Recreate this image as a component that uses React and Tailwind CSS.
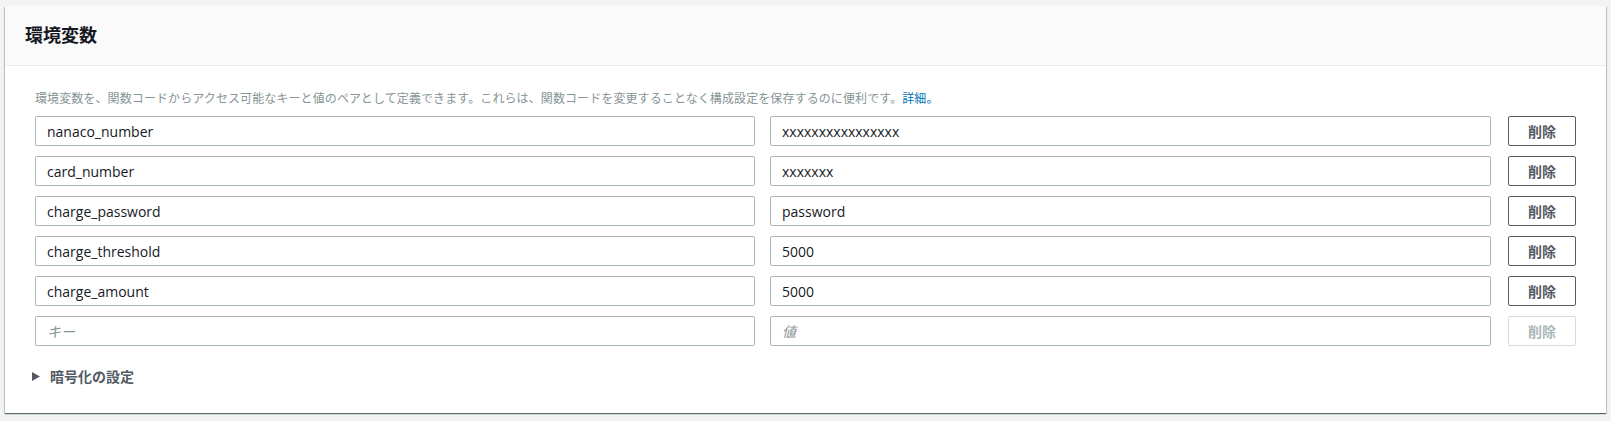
import React from 'react';

const rows = [
  { key: 'nanaco_number', value: 'xxxxxxxxxxxxxxxx' },
  { key: 'card_number', value: 'xxxxxxx' },
  { key: 'charge_password', value: 'password' },
  { key: 'charge_threshold', value: '5000' },
  { key: 'charge_amount', value: '5000' },
];

const font = { fontFamily: '"Open Sans", "Noto Sans CJK JP", sans-serif' };

const inputCls =
  'h-[30px] w-full rounded-[2px] border border-[#aab7b8] bg-white px-[11px] text-[14px] text-[#16191f] outline-none placeholder:italic placeholder:text-[#879596]';

export default function App() {
  return (
    <div className="min-h-[421px] bg-[#f2f3f3] px-[5px] pt-[6px]" style={font}>
      <div className="bg-white shadow-[0_1px_1px_0_rgba(0,28,36,0.5),1px_1px_1px_0_rgba(0,28,36,0.15),-1px_1px_1px_0_rgba(0,28,36,0.15)]">
        <div className="flex h-[60px] items-center border-b border-[#eaeded] bg-[#fafafa] px-[20px]">
          <h2 className="text-[18px] font-bold text-[#16191f]">環境変数</h2>
        </div>
        <div className="px-[30px] pt-[24px] pb-[26px]">
          <p className="mb-[8px] text-[12px] leading-[18px] tracking-[0.1px] text-[#879596]">
            環境変数を、関数コードからアクセス可能なキーと値のペアとして定義できます。これらは、関数コードを変更することなく構成設定を保存するのに便利です。
            <a className="text-[#0073bb]">詳細。</a>
          </p>
          <div className="flex flex-col gap-[10px]">
            {rows.map((r) => (
              <div key={r.key} className="flex items-center">
                <div className="w-[720px] shrink-0">
                  <input className={inputCls} defaultValue={r.key} />
                </div>
                <div className="ml-[15px] flex-1">
                  <input className={inputCls} defaultValue={r.value} />
                </div>
                <button className="ml-[17px] h-[30px] w-[68px] shrink-0 rounded-[2px] border border-[#545b64] bg-white text-[14px] font-bold text-[#545b64]">
                  削除
                </button>
              </div>
            ))}
            <div className="flex items-center">
              <div className="w-[720px] shrink-0">
                <input className={inputCls} placeholder="キー" />
              </div>
              <div className="ml-[15px] flex-1">
                <input className={inputCls} placeholder="値" />
              </div>
              <button
                disabled
                className="ml-[17px] h-[30px] w-[68px] shrink-0 rounded-[2px] border border-[#d5dbdb] bg-white text-[14px] font-bold text-[#aab7b8]"
              >
                削除
              </button>
            </div>
          </div>
          <div className="mt-[20px] flex items-center gap-[10px] text-[14px] font-bold text-[#545b64]">
            <svg width="8" height="9" viewBox="0 0 8 9" className="-ml-[3px]">
              <path d="M0 0 L8 4.5 L0 9 Z" fill="#545b64" />
            </svg>
            <span>暗号化の設定</span>
          </div>
        </div>
      </div>
    </div>
  );
}
